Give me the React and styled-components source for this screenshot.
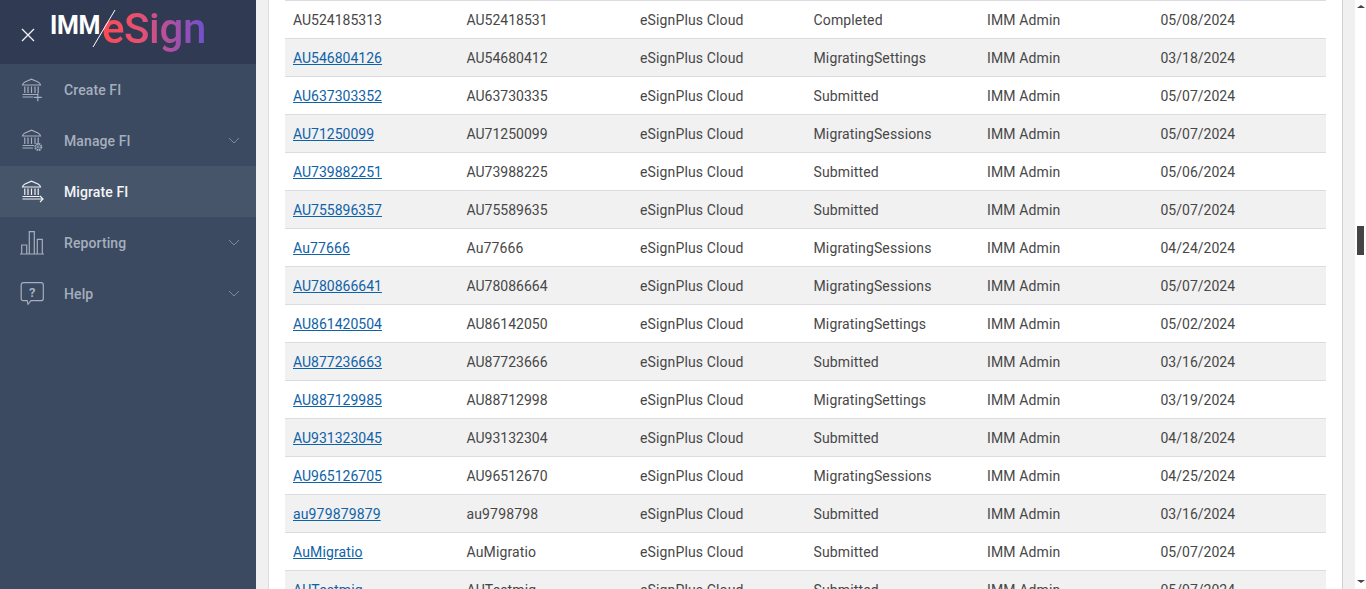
import React from 'react';
import styled, { createGlobalStyle } from 'styled-components';

const Global = createGlobalStyle`
  html, body { margin: 0; padding: 0; height: 100%; overflow: hidden; }
  body { font-family: Roboto, "Liberation Sans", sans-serif; }
`;

const Shell = styled.div`
  display: flex;
  width: 1366px;
  height: 589px;
  overflow: hidden;
  background: #fff;
`;

const Sidebar = styled.aside`
  flex: 0 0 256px;
  background: #3b4961;
  display: flex;
  flex-direction: column;
`;

const Header = styled.header`
  height: 64px;
  background: #303b53;
  display: flex;
  align-items: center;
  padding-left: 21px;
  gap: 14px;
`;

const CloseBtn = styled.svg`
  width: 14px;
  height: 14px;
  margin-top: 5px;
  flex: none;
`;

const Logo = styled.div`
  display: flex;
  align-items: flex-start;
  height: 64px;
  position: relative;
  flex: none;
  width: 160px;
`;

const LogoImm = styled.span`
  font-family: Roboto, sans-serif;
  font-weight: 700;
  font-size: 25px;
  line-height: 30px;
  color: #fff;
  letter-spacing: -0.4px;
  margin: 11px 0 0 1px;
`;

const LogoSlash = styled.svg`
  position: absolute;
  left: 43px;
  top: 9px;
  width: 24px;
  height: 40px;
`;

const LogoSign = styled.span`
  font-family: Roboto, sans-serif;
  font-weight: 500;
  font-size: 42px;
  line-height: 50px;
  letter-spacing: -0.35px;
  margin-top: 4px;
  margin-left: 2px;
  background: linear-gradient(90deg, #ff4a50 0%, #e9506f 35%, #a750a8 70%, #6f50d0 100%);
  -webkit-background-clip: text;
  background-clip: text;
  color: transparent;
`;

const NavItem = styled.div`
  height: 51px;
  display: flex;
  align-items: center;
  padding: 0 16px 0 20px;
  background: ${p => (p.$active ? '#47556b' : 'transparent')};
  color: ${p => (p.$active ? '#f4f5f7' : '#a5afbd')};
`;

const NavIcon = styled.svg`
  width: 27px;
  height: 27px;
  flex: none;
  fill: none;
  stroke: ${p => (p.$active ? '#f0f2f5' : '#a5afbd')};
  stroke-width: 1.2;
`;

const NavLabel = styled.span`
  margin-left: 17px;
  flex: 1;
  font-size: 14px;
  font-weight: 500;
  letter-spacing: 0.1px;
`;

const Chevron = styled.svg`
  width: 12px;
  height: 7px;
  fill: none;
  stroke: #7e8a9c;
  stroke-width: 1;
`;

const Main = styled.main`
  flex: 1;
  min-width: 0;
  display: flex;
  background: #f0f0f0;
  padding: 0 12px 0 12px;
`;

const Content = styled.div`
  flex: 1;
  min-width: 0;
  background: #fff;
  border-left: 1px solid #dcdcdc;
  border-right: 1px solid #cfcfcf;
  padding: 0 16px;
`;

const Table = styled.div`
  display: flex;
  flex-direction: column;
`;

const Row = styled.div`
  display: grid;
  grid-template-columns: repeat(6, 173.5px);
  height: 38px;
  flex: none;
  box-sizing: border-box;
  align-items: center;
  border-top: 1px solid #dcdce0;
  background: ${p => (p.$alt ? '#f1f1f1' : '#fff')};
`;

const Cell = styled.div`
  padding-left: 8px;
  font-size: 14px;
  line-height: 20px;
  color: #474747;
  white-space: nowrap;
  letter-spacing: ${p => (p.$spaced ? '0.14px' : '0')};
`;

const RowLink = styled.a`
  color: #0f62a8;
  text-decoration: underline;
`;

const Scrollbar = styled.div`
  flex: 0 0 11px;
  background: #fff;
  display: flex;
  flex-direction: column;
  align-items: center;
`;

const ArrowUp = styled.div`
  width: 0;
  height: 0;
  margin-top: 5px;
  border-left: 4px solid transparent;
  border-right: 4px solid transparent;
  border-bottom: 3px solid #444;
`;

const ArrowDown = styled.div`
  width: 0;
  height: 0;
  margin-top: auto;
  margin-bottom: 6px;
  border-left: 4px solid transparent;
  border-right: 4px solid transparent;
  border-top: 3px solid #444;
`;

const Thumb = styled.div`
  width: 7px;
  height: 29px;
  margin-top: 218px;
  background: #444;
`;

const bank = (
  <>
    <path d="M2.5 9 Q3 7 5 6 L11.5 3.2 L18 6 Q20 7 20.5 9 Z" />
    <path d="M4.8 10.5 V17 M8 10.5 V17 M11.5 10.5 V17 M15 10.5 V17 M18.2 10.5 V17" />
  </>
);

const icons = {
  create: (
    <>
      {bank}
      <path d="M2.5 18.5 H18 M2.5 21 H13" />
      <path d="M17.8 17.3 V25.3 M13.8 21.3 H21.8" />
    </>
  ),
  manage: (
    <>
      {bank}
      <path d="M2.5 18.5 H14 M2.5 21 H13" />
      <circle cx="18.3" cy="20" r="3" strokeWidth="2" strokeDasharray="1.6 0.75" />
      <circle cx="18.3" cy="20" r="1" strokeWidth="0.8" />
    </>
  ),
  migrate: (
    <>
      {bank}
      <path d="M2.5 18.5 H19.5 M2.5 21 H23 M20 18 L23 21 L20 24" />
    </>
  ),
  reporting: <path d="M0 25 H24 M1.7 25 V16 H6.7 V25 M9.3 25 V2.7 H14.3 V25 M17.3 25 V10.3 H22.3 V25" />,
};

const HelpIcon = () => (
  <>
    <path d="M3.5 2.7 H21 Q23.3 2.7 23.3 5 V18.4 Q23.3 20.7 21 20.7 H11 L8 24.3 L7.2 20.7 H3.5 Q1.2 20.7 1.2 18.4 V5 Q1.2 2.7 3.5 2.7 Z" />
    <text x="12.2" y="16.5" textAnchor="middle" fontSize="13" fontWeight="700" fontFamily="Roboto, sans-serif" fill="#a5afbd" stroke="none">?</text>
  </>
);

const nav = [
  { label: 'Create FI', icon: icons.create },
  { label: 'Manage FI', icon: icons.manage, caret: true },
  { label: 'Migrate FI', icon: icons.migrate, active: true },
  { label: 'Reporting', icon: icons.reporting, caret: true },
  { label: 'Help', icon: <HelpIcon />, caret: true },
];

const rows = [
  ['AU524185313', 'AU52418531', 'Completed', '05/08/2024', true],
  ['AU546804126', 'AU54680412', 'MigratingSettings', '03/18/2024'],
  ['AU637303352', 'AU63730335', 'Submitted', '05/07/2024'],
  ['AU71250099', 'AU71250099', 'MigratingSessions', '05/07/2024'],
  ['AU739882251', 'AU73988225', 'Submitted', '05/06/2024'],
  ['AU755896357', 'AU75589635', 'Submitted', '05/07/2024'],
  ['Au77666', 'Au77666', 'MigratingSessions', '04/24/2024'],
  ['AU780866641', 'AU78086664', 'MigratingSessions', '05/07/2024'],
  ['AU861420504', 'AU86142050', 'MigratingSettings', '05/02/2024'],
  ['AU877236663', 'AU87723666', 'Submitted', '03/16/2024'],
  ['AU887129985', 'AU88712998', 'MigratingSettings', '03/19/2024'],
  ['AU931323045', 'AU93132304', 'Submitted', '04/18/2024'],
  ['AU965126705', 'AU96512670', 'MigratingSessions', '04/25/2024'],
  ['au979879879', 'au9798798', 'Submitted', '03/16/2024'],
  ['AuMigratio', 'AuMigratio', 'Submitted', '05/07/2024'],
  ['AUTestmig', 'AUTestmig', 'Submitted', '05/07/2024'],
];

const hasLower = t => /[a-z]/.test(t);

export default function App() {
  return (
    <Shell>
      <Global />
      <Sidebar>
        <Header>
          <CloseBtn viewBox="0 0 14 14" fill="none" stroke="#f2f3f5" strokeWidth="1.3">
            <path d="M1 1 L13 13 M13 1 L1 13" />
          </CloseBtn>
          <Logo>
            <LogoImm>IMM</LogoImm>
            <LogoSlash viewBox="0 0 24 40" fill="none" stroke="#fff" strokeWidth="1">
              <path d="M23 1 L1 38" />
            </LogoSlash>
            <LogoSign>eSign</LogoSign>
          </Logo>
        </Header>
        {nav.map(item => (
          <NavItem key={item.label} $active={item.active}>
            <NavIcon $active={item.active} viewBox="0 0 27 27">{item.icon}</NavIcon>
            <NavLabel>{item.label}</NavLabel>
            {item.caret && (
              <Chevron viewBox="0 0 12 7">
                <path d="M1 1 L6 6 L11 1" />
              </Chevron>
            )}
          </NavItem>
        ))}
      </Sidebar>
      <Main>
        <Content>
          <Table>
            {rows.map((r, i) => (
              <Row key={r[0]} $alt={i % 2 === 1}>
                <Cell $spaced={hasLower(r[0])}>{r[4] ? r[0] : <RowLink href="#">{r[0]}</RowLink>}</Cell>
                <Cell $spaced={hasLower(r[1])}>{r[1]}</Cell>
                <Cell $spaced>eSignPlus Cloud</Cell>
                <Cell $spaced>{r[2]}</Cell>
                <Cell $spaced>IMM Admin</Cell>
                <Cell>{r[3]}</Cell>
              </Row>
            ))}
          </Table>
        </Content>
      </Main>
      <Scrollbar>
        <ArrowUp />
        <Thumb />
        <ArrowDown />
      </Scrollbar>
    </Shell>
  );
}
